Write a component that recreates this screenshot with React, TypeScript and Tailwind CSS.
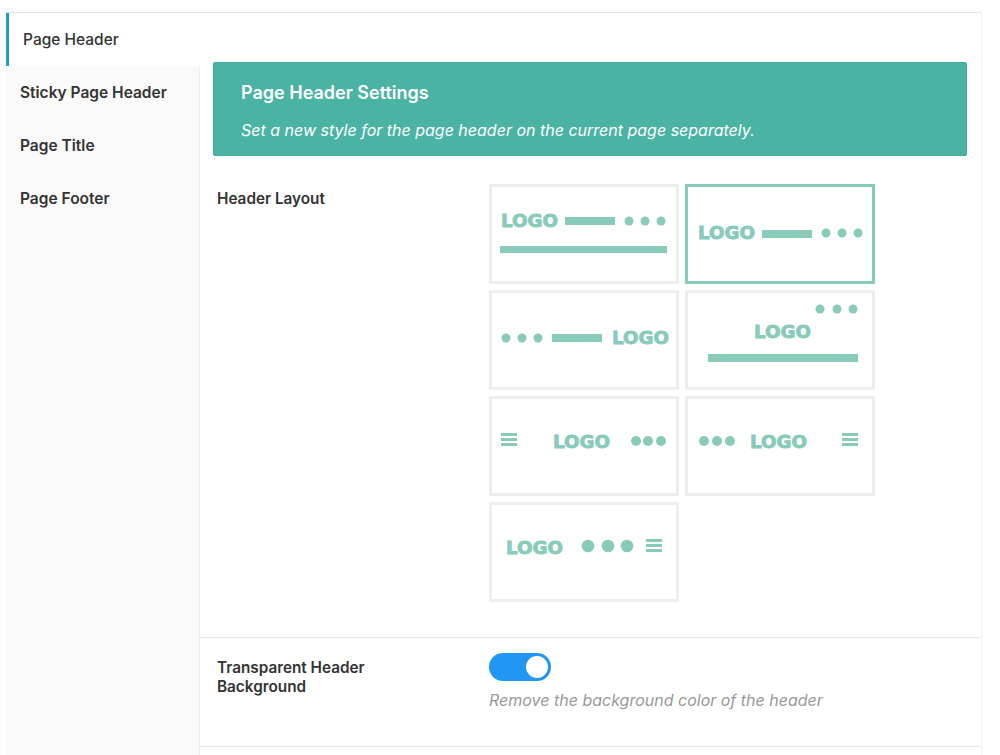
import type { ReactNode } from "react";

const TEAL = "#88cbbb";

function Logo({ x, y }: { x: number; y: number }) {
  return (
    <text
      x={x}
      y={y}
      fill={TEAL}
      stroke={TEAL}
      strokeWidth="0.9"
      fontFamily="'DejaVu Sans', sans-serif"
      fontWeight="bold"
      fontSize="18.5"
      textLength="57"
      lengthAdjust="spacingAndGlyphs"
    >
      LOGO
    </text>
  );
}

function Dots({ xs, cy, r = 4.5 }: { xs: number[]; cy: number; r?: number }) {
  return (
    <>
      {xs.map((cx) => (
        <circle key={cx} cx={cx} cy={cy} r={r} fill={TEAL} />
      ))}
    </>
  );
}

function Bar({ x, y, w, h = 8 }: { x: number; y: number; w: number; h?: number }) {
  return <rect x={x} y={y} width={w} height={h} fill={TEAL} />;
}

function Burger({ x, y }: { x: number; y: number }) {
  return (
    <>
      <rect x={x} y={y} width={16} height={3} fill={TEAL} />
      <rect x={x} y={y + 5} width={16} height={3} fill={TEAL} />
      <rect x={x} y={y + 10} width={16} height={3} fill={TEAL} />
    </>
  );
}

function Cell({ active, children }: { active?: boolean; children: ReactNode }) {
  return (
    <div
      className={`w-[190px] h-[100px] bg-white border-[3px] ${
        active ? "border-[#86cbbb]" : "border-[#eeeeee]"
      }`}
    >
      <svg width="184" height="94" viewBox="3 3 184 94">
        {children}
      </svg>
    </div>
  );
}

const tabs = ["Page Header", "Sticky Page Header", "Page Title", "Page Footer"];

export default function App() {
  return (
    <div className="w-[1000px] h-[755px] bg-white overflow-hidden font-['Inter',sans-serif]">
      <div className="ml-[6px] mt-[12px] w-[976px] h-[743px] flex border-t border-r border-t-[#e3e3e3] border-r-[#f2f2f2]">
        {/* Sidebar */}
        <aside className="w-[194px] shrink-0 bg-[#fafafa] border-r border-[#f0f0f0]">
          {tabs.map((tab, i) =>
            i === 0 ? (
              <div
                key={tab}
                className="h-[53px] flex items-center bg-white border-l-[3px] border-[#1e9bd7] pl-[14px] -mr-px text-[15.5px] font-medium text-[#333]"
              >
                {tab}
              </div>
            ) : (
              <div key={tab} className="h-[53px] flex items-center pl-[14px] text-[15.5px] font-semibold text-[#333]">
                {tab}
              </div>
            )
          )}
        </aside>

        {/* Content */}
        <main className="flex-1 pt-[49px]">
          <div className="ml-[13px] mr-[14px] h-[94px] bg-[#4ab3a3] border border-[#42ab9a] rounded-[2px] pl-[27px] pt-[19px]">
            <h2 className="text-[18px] font-semibold text-white leading-[22px]">Page Header Settings</h2>
            <p className="mt-[16px] text-[16px] italic text-white leading-[20px]">
              Set a new style for the page header on the current page separately.
            </p>
          </div>

          <div className="flex mt-[28px] pb-[35px] border-b border-[#e8e8e8]">
            <div className="w-[289px] pl-[17px] pt-[5px] text-[15.3px] font-semibold text-[#333] leading-[20px]">
              Header Layout
            </div>
            <div className="grid grid-cols-[190px_190px] auto-rows-[100px] gap-[6px]">
              <Cell>
                <Logo x={12} y={43} />
                <Bar x={76} y={33} w={50} />
                <Dots xs={[140, 156, 172]} cy={37} />
                <Bar x={11} y={62} w={167} h={7} />
              </Cell>
              <Cell active>
                <Logo x={13} y={55} />
                <Bar x={77} y={46} w={50} />
                <Dots xs={[141, 157, 173]} cy={49} />
              </Cell>
              <Cell>
                <Dots xs={[17, 33, 49]} cy={48} />
                <Bar x={63} y={44} w={50} />
                <Logo x={123} y={54} />
              </Cell>
              <Cell>
                <Dots xs={[135, 152, 168]} cy={19} />
                <Logo x={69} y={48} />
                <Bar x={23} y={64} w={150} />
              </Cell>
              <Cell>
                <Burger x={12} y={37} />
                <Logo x={64} y={52} />
                <Dots xs={[147, 159, 172]} cy={45} r={5} />
              </Cell>
              <Cell>
                <Dots xs={[19, 32, 45]} cy={45} r={5} />
                <Logo x={65} y={52} />
                <Burger x={157} y={37} />
              </Cell>
              <Cell>
                <Logo x={17} y={52} />
                <Dots xs={[99, 119, 138]} cy={44} r={6.3} />
                <Burger x={157} y={37} />
              </Cell>
            </div>
          </div>

          <div className="flex pt-[15px] pb-[36px] border-b border-[#e8e8e8]">
            <div className="w-[289px] pl-[17px] pt-[5px] text-[15.3px] font-semibold text-[#333] leading-[19px]">
              <p className="max-w-[190px]">Transparent Header Background</p>
            </div>
            <div>
              <div className="w-[62px] h-[28px] rounded-full bg-[#2196f3] flex items-center justify-end pr-[3px]">
                <div className="w-[22px] h-[22px] rounded-full bg-white" />
              </div>
              <p className="mt-[9px] text-[16px] italic text-[#999] leading-[20px]">
                Remove the background color of the header
              </p>
            </div>
          </div>
        </main>
      </div>
    </div>
  );
}
